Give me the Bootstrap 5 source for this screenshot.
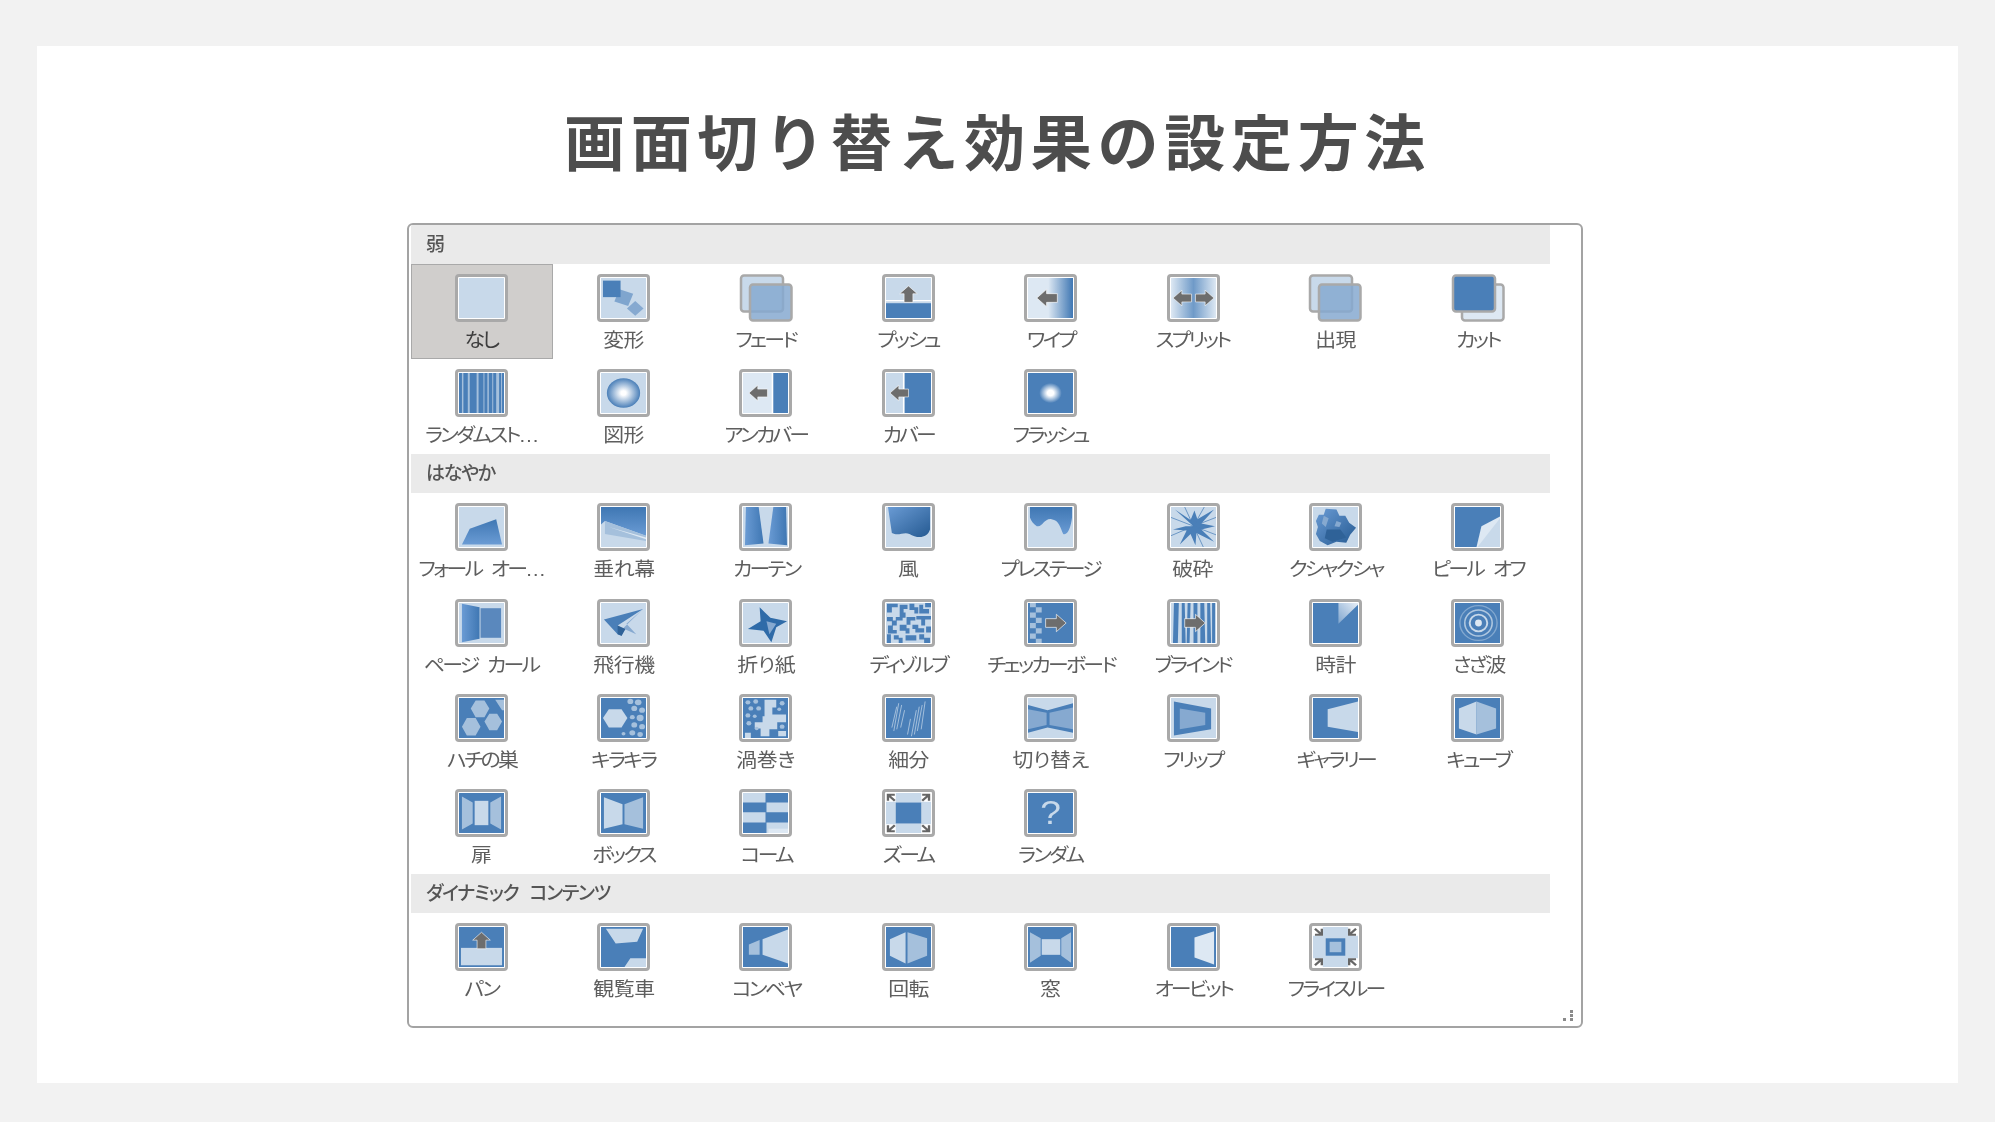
<!DOCTYPE html>
<html lang="ja">
<head>
<meta charset="utf-8">
<title>画面切り替え効果の設定方法</title>
<link href="https://cdn.jsdelivr.net/npm/bootstrap@5.3.0/dist/css/bootstrap.min.css" rel="stylesheet">
<style>
html,body{height:100%}
body{background:#f2f2f2;font-family:"Liberation Sans","Noto Sans CJK JP",sans-serif;padding:46px 37px 39px}
.fx-sheet{background:#fff;width:1921px;height:1037px}
.fx-title{font-family:"Noto Sans CJK JP",sans-serif;font-size:61px;font-weight:700;color:#4d4d4d;letter-spacing:5.7px;line-height:1;height:177px;padding-top:63px;margin:0;text-align:center}
.fx-dialog{width:1176px;height:805px;margin-left:370px;border:2px solid #a3a3a3;border-radius:6px;padding:0 2px;background:#fff}
.fx-head{width:1139px;height:39px;background:#eaeaea;color:#555;font-size:19px;font-weight:500;padding-left:15px;line-height:39px;font-feature-settings:"palt";letter-spacing:-1.2px;word-spacing:7px;filter:blur(.5px)}
.fx-grid{display:grid;grid-template-columns:repeat(8,142.375px);grid-auto-rows:95.2px;width:1139px}
.fx-cell{padding:10px 2px 0 0;text-align:center}
.fx-on{background:#d0cecc;outline:1.5px solid #a9a9a9;outline-offset:-1.5px}
.fx-tile{width:53px;height:48px;margin:0 auto;border:3px solid #a9a9a9;border-radius:4px;background:#fff;padding:1px;filter:blur(.45px)}
.fx-tile svg{display:block;width:45px;height:40px;background:#c8d9ea}
.fx-free{width:54px;height:48px;margin:0 auto;filter:blur(.45px)}
.fx-free svg{display:block;width:54px;height:48px}
.fx-label{display:inline-block;margin-top:7px;font-size:19px;line-height:24px;color:#5e5e5e;white-space:nowrap;font-feature-settings:"palt";letter-spacing:-2.5px;word-spacing:6px;transform:scaleX(1.1);filter:blur(.6px)}
.fx-on .fx-label{color:#3d3d3d}
.fx-kanji{letter-spacing:-.4px}
.fb{fill:#4a7fb8}.fl{fill:#c8d9ea}.fm{fill:#86a9d0}.fp{fill:#dde8f3}.fd{fill:#2f6298}.fs{fill:#a5c0dc}
.fw{fill:none;stroke:#fff;stroke-width:1.4}
.fx-grip{position:absolute;right:8px;bottom:5px;width:11px;height:11px}
.fx-defs{display:block;width:0;height:0}
</style>
</head>
<body>
<svg class="fx-defs" aria-hidden="true">
<defs>
<path id="al" d="M-11 0L-1-10V-5H10V5H-1V10Z" fill="#6d6d6d" stroke="#fff" stroke-width=".7"/>
<linearGradient id="gw"><stop offset=".45" stop-color="#dde8f3"/><stop offset="1" stop-color="#3f77b3"/></linearGradient>
<linearGradient id="gs"><stop offset="0" stop-color="#dde8f3"/><stop offset=".5" stop-color="#6f9ac8"/><stop offset="1" stop-color="#dde8f3"/></linearGradient>
<linearGradient id="gv" x2="0" y2="1"><stop offset="0" stop-color="#3f77b3"/><stop offset="1" stop-color="#6a9bd4"/></linearGradient>
<linearGradient id="gh"><stop offset="0" stop-color="#6a9bd4"/><stop offset="1" stop-color="#3f77b3"/></linearGradient>
<linearGradient id="gd" x1="0" y1="0" x2="1" y2="1"><stop offset="0" stop-color="#6a9bd4"/><stop offset="1" stop-color="#255a92"/></linearGradient>
<linearGradient id="gc" x1="0" y1="1" x2="1" y2="0"><stop offset="0" stop-color="#7fa5ce"/><stop offset="1" stop-color="#e6eef7"/></linearGradient>
<radialGradient id="rs"><stop offset=".15" stop-color="#fff"/><stop offset="1" stop-color="#4a7fb8"/></radialGradient>
<radialGradient id="rf"><stop offset=".14" stop-color="#fff"/><stop offset=".5" stop-color="#4a7fb8"/></radialGradient>
</defs>
</svg>
<main class="fx-sheet">
<h1 class="fx-title">画面切り替え効果の設定方法</h1>
<section class="fx-dialog position-relative">

<div class="fx-head">弱</div>
<div class="fx-grid">
<div class="fx-cell fx-on"><div class="fx-tile"><svg viewBox="0 0 46 46" preserveAspectRatio="none"></svg></div><span class="fx-label">なし</span></div>
<div class="fx-cell"><div class="fx-tile"><svg viewBox="0 0 46 46" preserveAspectRatio="none"><rect class="fm" x="29" y="29" width="12" height="12" transform="rotate(45 35 35)"/><rect fill="#7fa5ce" x="16" y="15" width="15" height="15" transform="rotate(20 23 22)"/><rect class="fb" x="2" y="3" width="18" height="19"/></svg></div><span class="fx-label fx-kanji">変形</span></div>
<div class="fx-cell"><div class="fx-free"><svg viewBox="0 0 54 48"><rect x="2" y="1.5" width="42" height="36" rx="3" fill="#c8d9ea" stroke="#a9a9a9" stroke-width="2.5"/><rect x="11" y="10.5" width="41.5" height="36" rx="3" fill="#86a9d0" fill-opacity=".85" stroke="#a9a9a9" stroke-width="2.5"/></svg></div><span class="fx-label">フェード</span></div>
<div class="fx-cell"><div class="fx-tile"><svg viewBox="0 0 46 46" preserveAspectRatio="none"><rect class="fb" y="29" width="46" height="17"/><path d="M0 26H46" class="fw"/><use href="#al" transform="translate(23 19) rotate(90) scale(.9)"/></svg></div><span class="fx-label">プッシュ</span></div>
<div class="fx-cell"><div class="fx-tile"><svg viewBox="0 0 46 46" preserveAspectRatio="none"><rect width="46" height="46" fill="url(#gw)"/><use href="#al" transform="translate(20 23)"/></svg></div><span class="fx-label">ワイプ</span></div>
<div class="fx-cell"><div class="fx-tile"><svg viewBox="0 0 46 46" preserveAspectRatio="none"><rect width="46" height="46" fill="url(#gs)"/><use href="#al" transform="translate(12 23) scale(.9)"/><use href="#al" transform="translate(34 23) rotate(180) scale(.9)"/></svg></div><span class="fx-label">スプリット</span></div>
<div class="fx-cell"><div class="fx-free"><svg viewBox="0 0 54 48"><rect x="2" y="1.5" width="42" height="36" rx="3" fill="#c8d9ea" stroke="#a9a9a9" stroke-width="2.5"/><rect x="11" y="10.5" width="41.5" height="36" rx="3" fill="#86a9d0" fill-opacity=".85" stroke="#a9a9a9" stroke-width="2.5"/></svg></div><span class="fx-label fx-kanji">出現</span></div>
<div class="fx-cell"><div class="fx-free"><svg viewBox="0 0 54 48"><rect x="11" y="10.5" width="41.5" height="36" rx="3" fill="#dde8f3" stroke="#a9a9a9" stroke-width="2.5"/><rect x="2" y="1.5" width="42" height="36" rx="3" fill="#4a7fb8" stroke="#a9a9a9" stroke-width="2.5"/></svg></div><span class="fx-label">カット</span></div>

<div class="fx-cell"><div class="fx-tile"><svg viewBox="0 0 46 46" preserveAspectRatio="none"><rect class="fb" width="46" height="46"/><path class="fs" d="M3 0h1.5v46H3zM9 0h2v46H9zM18 0h2v46h-2zM25 0h1v46h-1zM29 0h1.500v46H29zM34 0h1v46h-1zM38 0h3v46h-3zM43 0h1v46h-1z"/></svg></div><span class="fx-label">ランダムスト…</span></div>
<div class="fx-cell"><div class="fx-tile"><svg viewBox="0 0 46 46" preserveAspectRatio="none"><circle cx="23" cy="23" r="17" fill="url(#rs)"/></svg></div><span class="fx-label fx-kanji">図形</span></div>
<div class="fx-cell"><div class="fx-tile"><svg viewBox="0 0 46 46" preserveAspectRatio="none"><rect class="fp" width="46" height="46"/><rect class="fb" x="31" width="15" height="46"/><path d="M30 0V46" class="fw"/><use href="#al" transform="translate(16 23) scale(.9)"/></svg></div><span class="fx-label">アンカバー</span></div>
<div class="fx-cell"><div class="fx-tile"><svg viewBox="0 0 46 46" preserveAspectRatio="none"><rect class="fb" x="19" width="27" height="46"/><path d="M18 0V46" class="fw"/><use href="#al" transform="translate(14 23) scale(.9)"/></svg></div><span class="fx-label">カバー</span></div>
<div class="fx-cell"><div class="fx-tile"><svg viewBox="0 0 46 46" preserveAspectRatio="none"><rect width="46" height="46" fill="url(#rf)"/></svg></div><span class="fx-label">フラッシュ</span></div>
</div>

<div class="fx-head">はなやか</div>
<div class="fx-grid">
<div class="fx-cell"><div class="fx-tile"><svg viewBox="0 0 46 46" preserveAspectRatio="none"><path d="M3 43L11 25 38 14 44 43Z" fill="url(#gv)"/></svg></div><span class="fx-label">フォール オー…</span></div>
<div class="fx-cell"><div class="fx-tile"><svg viewBox="0 0 46 46" preserveAspectRatio="none"><path d="M0 0H46V33L4 16 0 20Z" fill="url(#gv)"/><path class="fs" d="M4 16L46 33V39L4 31Z"/><path class="fp" d="M8 23L46 35V37Z"/></svg></div><span class="fx-label fx-kanji">垂れ幕</span></div>
<div class="fx-cell"><div class="fx-tile"><svg viewBox="0 0 46 46" preserveAspectRatio="none"><path d="M3 0H16L21 42 2 44Z" fill="url(#gh)"/><path d="M31 0H44L45 44 26 42Z" fill="url(#gh)"/></svg></div><span class="fx-label">カーテン</span></div>
<div class="fx-cell"><div class="fx-tile"><svg viewBox="0 0 46 46" preserveAspectRatio="none"><path d="M2 0H45V26C42 37 31 36 24 31 18 28 13 34 6 30Z" fill="url(#gd)"/></svg></div><span class="fx-label fx-kanji">風</span></div>
<div class="fx-cell"><div class="fx-tile"><svg viewBox="0 0 46 46" preserveAspectRatio="none"><path d="M2 0H45V12C44 22 41 33 36 31 33 24 32 15 24 14 16 13 15 24 9 22 6 20 3 16 2 12Z" fill="url(#gv)"/></svg></div><span class="fx-label">プレステージ</span></div>
<div class="fx-cell"><div class="fx-tile"><svg viewBox="0 0 46 46" preserveAspectRatio="none"><path class="fb" d="M23 22L4 3 20 15 24 4 27 14 44 3 31 19 45 22 31 26 44 40 26 30 25 44 20 31 9 43 16 27 2 26 15 22Z"/><path stroke="#4a7fb8" stroke-width=".8" d="M23 22L0 12M23 22L0 33M23 22L46 12M23 22L46 32M23 22L33 46M23 22L14 0M23 22L34 0"/></svg></div><span class="fx-label fx-kanji">破砕</span></div>
<div class="fx-cell"><div class="fx-tile"><svg viewBox="0 0 46 46" preserveAspectRatio="none"><path d="M3 16L6 9 11 9 13 2 24 3 27 10 33 10 37 18 44 24 38 32 34 41 24 40 15 44 7 39 3 31 5 23Z" fill="url(#gd)"/><path class="fm" d="M11 10l5 3-3 10-4-4zM24 16l5 2-2 5-5-1z"/><path class="fd" d="M14 26l14 0 6 9-14 5-8-4z"/></svg></div><span class="fx-label">クシャクシャ</span></div>
<div class="fx-cell"><div class="fx-tile"><svg viewBox="0 0 46 46" preserveAspectRatio="none"><rect class="fb" width="46" height="46"/><path class="fp" d="M22 46L27 22 46 11V46Z"/><path class="fl" d="M23 46L46 13V46Z"/></svg></div><span class="fx-label">ピール オフ</span></div>

<div class="fx-cell"><div class="fx-tile"><svg viewBox="0 0 46 46" preserveAspectRatio="none"><path d="M3 1L21 5V41L3 45Z" fill="url(#gh)"/><rect x="22" y="6" width="21" height="34" fill="#5a88bd"/></svg></div><span class="fx-label">ページ カール</span></div>
<div class="fx-cell"><div class="fx-tile"><svg viewBox="0 0 46 46" preserveAspectRatio="none"><path class="fm" d="M43 7L26 24 36 36 24 30 19 33Z"/><path class="fb" d="M3 19L43 7 17 26 24 31 21 37 17 36Z"/><path class="fd" d="M17 26l8 4-4 8-4-2z"/></svg></div><span class="fx-label fx-kanji">飛行機</span></div>
<div class="fx-cell"><div class="fx-tile"><svg viewBox="0 0 46 46" preserveAspectRatio="none"><path fill="#2f6ba8" d="M5 30L18 21 17 5 28 17 45 21 34 28 29 45 21 32Z"/><path class="fm" d="M24 21L34 24 27 36Z"/></svg></div><span class="fx-label fx-kanji">折り紙</span></div>
<div class="fx-cell"><div class="fx-tile"><svg viewBox="0 0 46 46" preserveAspectRatio="none"><path class="fb" d="M1 1h11v4H6v6H1zM14 2h8v5h-4v4h-4zM14 11h6v6h-3v3h-7v-4h4zM24 1h5v4h4v7h-4V8h-5zM34 2h4v5h6v5h-10zM40 0h6v5h-6zM1 16h6v4h4v6H6v-5H1zM21 16h9v4h-5v5h-4zM31 15h15v4h-6v7h-4v-7h-5zM2 26h5v5h4v4H2zM14 25h7v4h3v6h-4v-3h-6zM27 25h6v4h6v5h-9v-4h-3zM41 27h5v7h-5zM1 36h4v10H1zM8 37h5v3h4v6h-4v-4H8zM20 37h11v6H20zM34 36h5v4h6v6h-6v-4h-5z"/></svg></div><span class="fx-label">ディゾルブ</span></div>
<div class="fx-cell"><div class="fx-tile"><svg viewBox="0 0 46 46" preserveAspectRatio="none"><rect class="fb" width="46" height="46"/><path class="fs" d="M2 0h6v5H2zM8 5h6v6H8zM2 11h6v6H2zM8 17h6v6H8zM2 23h6v6H2zM8 29h6v6H8zM2 35h6v6H2zM8 41h6v5H8z"/><use href="#al" transform="translate(28 23) rotate(180)"/></svg></div><span class="fx-label">チェッカーボード</span></div>
<div class="fx-cell"><div class="fx-tile"><svg viewBox="0 0 46 46" preserveAspectRatio="none"><rect class="fl" width="46" height="46"/><path class="fb" d="M3 0h5l-1 46H2zM11 0h3l1 46h-4zM17 0h3l-1 46h-3zM23 0h4v46h-4zM30 0h4l1 46h-5zM37 0h3l1 46h-4zM42 0h3v46h-3z"/><use href="#al" transform="translate(24 23) rotate(180)"/></svg></div><span class="fx-label">ブラインド</span></div>
<div class="fx-cell"><div class="fx-tile"><svg viewBox="0 0 46 46" preserveAspectRatio="none"><rect class="fb" width="46" height="46"/><path fill="url(#gc)" d="M26 0H46V2L26 24Z"/></svg></div><span class="fx-label fx-kanji">時計</span></div>
<div class="fx-cell"><div class="fx-tile"><svg viewBox="0 0 46 46" preserveAspectRatio="none"><rect class="fb" width="46" height="46"/><g fill="none" stroke="#c8d9ea"><ellipse cx="24" cy="23" rx="19" ry="20" stroke-opacity=".45" stroke-width="1.4"/><ellipse cx="24" cy="23" rx="14" ry="15" stroke-width="1.6" stroke-opacity=".8"/><ellipse cx="24" cy="23" rx="9" ry="9.500" stroke-width="2"/></g><ellipse cx="24" cy="23" rx="3.500" ry="4" fill="#dde8f3"/></svg></div><span class="fx-label">さざ波</span></div>

<div class="fx-cell"><div class="fx-tile"><svg viewBox="0 0 46 46" preserveAspectRatio="none"><rect class="fb" width="46" height="46"/><path class="fs" d="M17 3h9l5 9-5 10h-9l-5-10zM8 23h9l5 10-5 10H8L3 33zM31 18h8l5 9-5 10h-8l-5-10zM37 2h9v12h-2z"/></svg></div><span class="fx-label">ハチの巣</span></div>
<div class="fx-cell"><div class="fx-tile"><svg viewBox="0 0 46 46" preserveAspectRatio="none"><rect class="fb" width="46" height="46"/><path class="fl" d="M8 13h13l6 10-6 11H8L2 23z"/><g class="fs"><circle cx="30" cy="4" r="3"/><circle cx="38" cy="5" r="3.400"/><circle cx="34" cy="12" r="3"/><circle cx="42" cy="14" r="3"/><circle cx="32" cy="22" r="2.500"/><circle cx="40" cy="23" r="3.600"/><circle cx="34" cy="31" r="3"/><circle cx="42" cy="33" r="3"/><circle cx="32" cy="40" r="3"/><circle cx="40" cy="42" r="2.800"/><circle cx="23" cy="41" r="2"/></g></svg></div><span class="fx-label">キラキラ</span></div>
<div class="fx-cell"><div class="fx-tile"><svg viewBox="0 0 46 46" preserveAspectRatio="none"><rect class="fb" width="46" height="46"/><path class="fl" d="M22 2h12v9h-4v8h14v9h-9v8h-8v8h-9v-9h-6v-7h8v-7h2zM2 40h6v6H2zM36 38h8v6h-8z"/><g class="fs"><circle cx="5" cy="5" r="2.500"/><circle cx="13" cy="4" r="2.500"/><circle cx="8" cy="12" r="2.500"/><circle cx="16" cy="12" r="2.500"/><circle cx="5" cy="20" r="2.500"/><circle cx="12" cy="21" r="2"/><circle cx="6" cy="29" r="2.500"/><circle cx="14" cy="35" r="2"/><circle cx="40" cy="6" r="2.500"/><circle cx="37" cy="13" r="2"/><circle cx="40" cy="33" r="2.500"/></g></svg></div><span class="fx-label fx-kanji">渦巻き</span></div>
<div class="fx-cell"><div class="fx-tile"><svg viewBox="0 0 46 46" preserveAspectRatio="none"><rect class="fb" width="46" height="46"/><g stroke="#c8d9ea" stroke-width=".9" stroke-opacity=".85"><path d="M11 10L6 34M13 6L8 38M16 8L11 36M19 14L15 34M25 24L22 42M31 14L26 44M34 10L29 42M37 8L32 38M40 4L36 36"/></g></svg></div><span class="fx-label fx-kanji">細分</span></div>
<div class="fx-cell"><div class="fx-tile"><svg viewBox="0 0 46 46" preserveAspectRatio="none"><path class="fb" d="M0 8L20 14 46 6V40L20 34 0 40Z"/><path class="fm" d="M0 13L19 17V31L0 36ZM22 17L46 11V36L22 31Z"/></svg></div><span class="fx-label fx-kanji">切り替え</span></div>
<div class="fx-cell"><div class="fx-tile"><svg viewBox="0 0 46 46" preserveAspectRatio="none"><path class="fb" d="M3 4L41 12V36L3 43Z"/><path class="fm" d="M9 12L35 17V31L9 36Z"/></svg></div><span class="fx-label">フリップ</span></div>
<div class="fx-cell"><div class="fx-tile"><svg viewBox="0 0 46 46" preserveAspectRatio="none"><rect class="fb" width="46" height="46"/><path class="fl" d="M15 13L46 4V39L15 33Z"/></svg></div><span class="fx-label">ギャラリー</span></div>
<div class="fx-cell"><div class="fx-tile"><svg viewBox="0 0 46 46" preserveAspectRatio="none"><rect class="fb" width="46" height="46"/><path class="fl" d="M4 12L22 4V42L4 35Z"/><path class="fs" d="M22 4L42 12V35L22 42Z"/></svg></div><span class="fx-label">キューブ</span></div>

<div class="fx-cell"><div class="fx-tile"><svg viewBox="0 0 46 46" preserveAspectRatio="none"><rect class="fb" width="46" height="46"/><path class="fs" d="M3 4L14 11V35L3 42ZM43 4L32 11V35L43 42Z"/><rect class="fl" x="16" y="9" width="14" height="28"/></svg></div><span class="fx-label fx-kanji">扉</span></div>
<div class="fx-cell"><div class="fx-tile"><svg viewBox="0 0 46 46" preserveAspectRatio="none"><rect class="fb" width="46" height="46"/><path class="fl" d="M3 5L22 13V36L3 41Z"/><path class="fs" d="M24 13L43 5V41L24 36Z"/></svg></div><span class="fx-label">ボックス</span></div>
<div class="fx-cell"><div class="fx-tile"><svg viewBox="0 0 46 46" preserveAspectRatio="none"><path class="fb" d="M23 0H46V11H23ZM0 11H24V22H0ZM23 22H46V34H23ZM0 34H24V46H0Z"/><path class="fp" d="M26 41H46V46H26Z"/></svg></div><span class="fx-label">コーム</span></div>
<div class="fx-cell"><div class="fx-tile"><svg viewBox="0 0 46 46" preserveAspectRatio="none"><path fill="#fff" d="M0 0h10v10H0zM36 0h10v10H36zM0 36h10v10H0zM36 36h10v10H36z"/><rect class="fb" x="10" y="11" width="26" height="24"/><g stroke="#666" stroke-width="2.400" fill="none"><path d="M2 2L9 9M2 9V2H9M44 2L37 9M37 2H44V9M2 44L9 37M2 37V44H9M44 44L37 37M37 44H44V37"/></g></svg></div><span class="fx-label">ズーム</span></div>
<div class="fx-cell"><div class="fx-tile"><svg viewBox="0 0 46 46" preserveAspectRatio="none"><rect class="fb" width="46" height="46"/><text x="23" y="36" text-anchor="middle" font-family="Liberation Sans,sans-serif" font-size="38" fill="#c8d9ea">?</text></svg></div><span class="fx-label">ランダム</span></div>
</div>

<div class="fx-head">ダイナミック コンテンツ</div>
<div class="fx-grid">
<div class="fx-cell"><div class="fx-tile"><svg viewBox="0 0 46 46" preserveAspectRatio="none"><rect class="fb" width="46" height="46"/><rect class="fl" x="2" y="24" width="42" height="20"/><use href="#al" transform="translate(23 16) rotate(90) scale(.9)"/></svg></div><span class="fx-label">パン</span></div>
<div class="fx-cell"><div class="fx-tile"><svg viewBox="0 0 46 46" preserveAspectRatio="none"><rect class="fb" width="46" height="46"/><path class="fl" d="M5 2H43L37 17 15 19ZM24 46L30 36 46 36V46Z"/></svg></div><span class="fx-label fx-kanji">観覧車</span></div>
<div class="fx-cell"><div class="fx-tile"><svg viewBox="0 0 46 46" preserveAspectRatio="none"><rect class="fb" width="46" height="46"/><path class="fl" d="M20 14L46 3V42L20 32Z"/><path class="fs" d="M6 20L17 15V32H6Z"/></svg></div><span class="fx-label">コンベヤ</span></div>
<div class="fx-cell"><div class="fx-tile"><svg viewBox="0 0 46 46" preserveAspectRatio="none"><rect class="fb" width="46" height="46"/><path class="fl" d="M4 14L20 6V42L4 33Z"/><path class="fs" d="M22 6L42 13V33L22 42Z"/></svg></div><span class="fx-label fx-kanji">回転</span></div>
<div class="fx-cell"><div class="fx-tile"><svg viewBox="0 0 46 46" preserveAspectRatio="none"><rect class="fb" width="46" height="46"/><path class="fs" d="M2 6L13 13V33L2 41ZM44 6L34 13V33L44 41Z"/><rect class="fl" x="14" y="14" width="19" height="18"/></svg></div><span class="fx-label fx-kanji">窓</span></div>
<div class="fx-cell"><div class="fx-tile"><svg viewBox="0 0 46 46" preserveAspectRatio="none"><rect class="fb" width="46" height="46"/><path class="fp" d="M24 12L44 5V43L24 35Z"/></svg></div><span class="fx-label">オービット</span></div>
<div class="fx-cell"><div class="fx-tile"><svg viewBox="0 0 46 46" preserveAspectRatio="none"><path fill="#fff" d="M0 0h10v10H0zM36 0h10v10H36zM0 36h10v10H0zM36 36h10v10H36z"/><rect class="fb" x="13" y="13" width="20" height="20"/><rect class="fs" x="17" y="17" width="12" height="12"/><g stroke="#666" stroke-width="2.400" fill="none"><path d="M2 2L9 9M9 2V9H2M44 2L37 9M37 2V9H44M2 44L9 37M2 37H9V44M44 44L37 37M37 44V37H44"/></g></svg></div><span class="fx-label">フライスルー</span></div>
</div>

<svg class="fx-grip" viewBox="0 0 11 11" aria-hidden="true"><path fill="#8a8a8a" d="M8 0h3v3H8zM8 4h3v3H8zM8 8h3v3H8zM1 8h3v3H1z"/></svg>
</section>
</main>
<script src="https://cdn.jsdelivr.net/npm/bootstrap@5.3.0/dist/js/bootstrap.bundle.min.js"></script>
</body>
</html>
